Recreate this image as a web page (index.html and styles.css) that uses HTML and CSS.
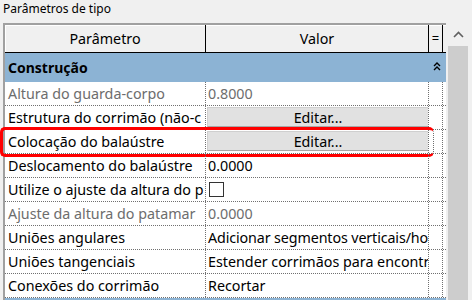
FILE: index.html
```html
<!DOCTYPE html>
<html lang="pt">
<head>
    <meta charset="UTF-8">
    <title>Parâmetros de tipo</title>
    <link rel="stylesheet" href="styles.css">
</head>
<body>
    <div class="title">Parâmetros de tipo</div>

    <div class="panel">
        <div class="grid">
            <div class="row head">
                <div class="c1">Parâmetro</div>
                <div class="c2">Valor</div>
                <div class="c3">=</div>
            </div>

            <div class="group">
                <span>Construção</span>
                <svg class="collapse" width="8" height="9" viewBox="0 0 8 9">
                    <path d="M1 4 L4 1 L7 4 M1 8 L4 5 L7 8" fill="none" stroke="#000" stroke-width="1.4"/>
                </svg>
            </div>

            <div class="row dim">
                <div class="c1">Altura do guarda-corpo</div>
                <div class="c2">0.8000</div>
                <div class="c3"></div>
            </div>
            <div class="row">
                <div class="c1">Estrutura do corrimão (não-c</div>
                <div class="c2"><button class="edit">Editar...</button></div>
                <div class="c3"></div>
            </div>
            <div class="row marked">
                <div class="c1">Colocação do balaústre</div>
                <div class="c2"><button class="edit">Editar...</button></div>
                <div class="c3"></div>
                <!-- highlight drawn over the row -->
                <div class="mark"></div>
            </div>
            <div class="row">
                <div class="c1">Deslocamento do balaústre</div>
                <div class="c2">0.0000</div>
                <div class="c3"></div>
            </div>
            <div class="row">
                <div class="c1">Utilize o ajuste da altura do p</div>
                <div class="c2"><span class="check"></span></div>
                <div class="c3"></div>
            </div>
            <div class="row dim">
                <div class="c1">Ajuste da altura do patamar</div>
                <div class="c2">0.0000</div>
                <div class="c3"></div>
            </div>
            <div class="row">
                <div class="c1">Uniões angulares</div>
                <div class="c2 tight">Adicionar segmentos verticais/ho</div>
                <div class="c3"></div>
            </div>
            <div class="row">
                <div class="c1">Uniões tangenciais</div>
                <div class="c2">Estender corrimãos para encontr</div>
                <div class="c3"></div>
            </div>
            <div class="row">
                <div class="c1">Conexões do corrimão</div>
                <div class="c2">Recortar</div>
                <div class="c3"></div>
            </div>

            <div class="group tail"></div>
        </div>

        <div class="scroll">
            <div class="arrow">
                <svg width="11" height="7" viewBox="0 0 11 7">
                    <path d="M1 6 L5.5 1.5 L10 6" fill="none" stroke="#606060" stroke-width="1.6"/>
                </svg>
            </div>
            <div class="thumb"></div>
        </div>
    </div>
</body>
</html>
```

FILE: styles.css
```css
body {
    margin: 0;
    height: 300px;
    overflow: hidden;
    background: #f0f0f0;
    font-family: "Noto Sans", "Open Sans", sans-serif;
    font-size: 14.3px;
    color: #000;
}

.title {
    height: 23px;
    padding-left: 3px;
    font-size: 12px;
    line-height: 17px;
}

.panel {
    display: flex;
    align-items: flex-start;
}

.grid {
    width: 441px;
    margin-left: 3px;
    border-top: 2px solid #a0a0a0;
    border-left: 2px solid #a0a0a0;
    background: #fff;
}

.row {
    position: relative;
    display: grid;
    grid-template-columns: 201px 223px 14px;
    height: 23px;
    border-bottom: 1px dotted #707070;
}

.row > div {
    white-space: nowrap;
    overflow: hidden;
    line-height: 23px;
    border-right: 1px dotted #707070;
}

.row .c1 {
    padding-left: 3px;
}

.row .c2 {
    padding-left: 2px;
}

.row .tight {
    letter-spacing: -0.12px;
}

.row.dim {
    color: #6d6d6d;
}

/* header */
.row.head {
    height: 27px;
    background: #f0f0f0;
    box-shadow: inset 1px 1px #fff;
    border-bottom: 1px solid #000;
}

.row.head > div {
    line-height: 27px;
    text-align: center;
    padding: 0;
    border-right: 1px solid #000;
}

.row.head .c3 {
    font-size: 13px;
}

.group {
    display: flex;
    justify-content: space-between;
    align-items: center;
    height: 29px;
    padding: 0 5px 0 3px;
    background: #8cb3d4;
    font-size: 14px;
    font-weight: bold;
}

.group.tail {
    height: 2px;
}

.collapse {
    margin-top: -2px;
}

.edit {
    display: block;
    width: 222px;
    height: 20px;
    margin: 1px 0 0 -1px;
    padding: 0;
    background: #e1e1e1;
    border: 1px solid;
    border-color: #cfcfcf #a8a8a8 #a8a8a8 #cfcfcf;
    font-family: inherit;
    font-size: 14.3px;
    line-height: 17px;
    color: #000;
}

.check {
    display: inline-block;
    width: 13px;
    height: 13px;
    margin: 4px 0 0 1px;
    border: 1px solid #333;
    background: #fff;
    vertical-align: top;
}

.mark {
    position: absolute;
    left: -5px;
    top: -3px;
    width: 430px;
    height: 24px;
    border: 3px solid #ff0000;
    border-radius: 5px;
    pointer-events: none;
}

/* scrollbar */
.scroll {
    width: 26px;
    height: 277px;
    background: #f0f0f0;
}

.arrow {
    height: 23px;
    display: flex;
    justify-content: center;
    align-items: center;
    padding-right: 2px;
}

.thumb {
    margin-left: 2px;
    width: 20px;
    height: 254px;
    background: #cdcdcd;
}
```
